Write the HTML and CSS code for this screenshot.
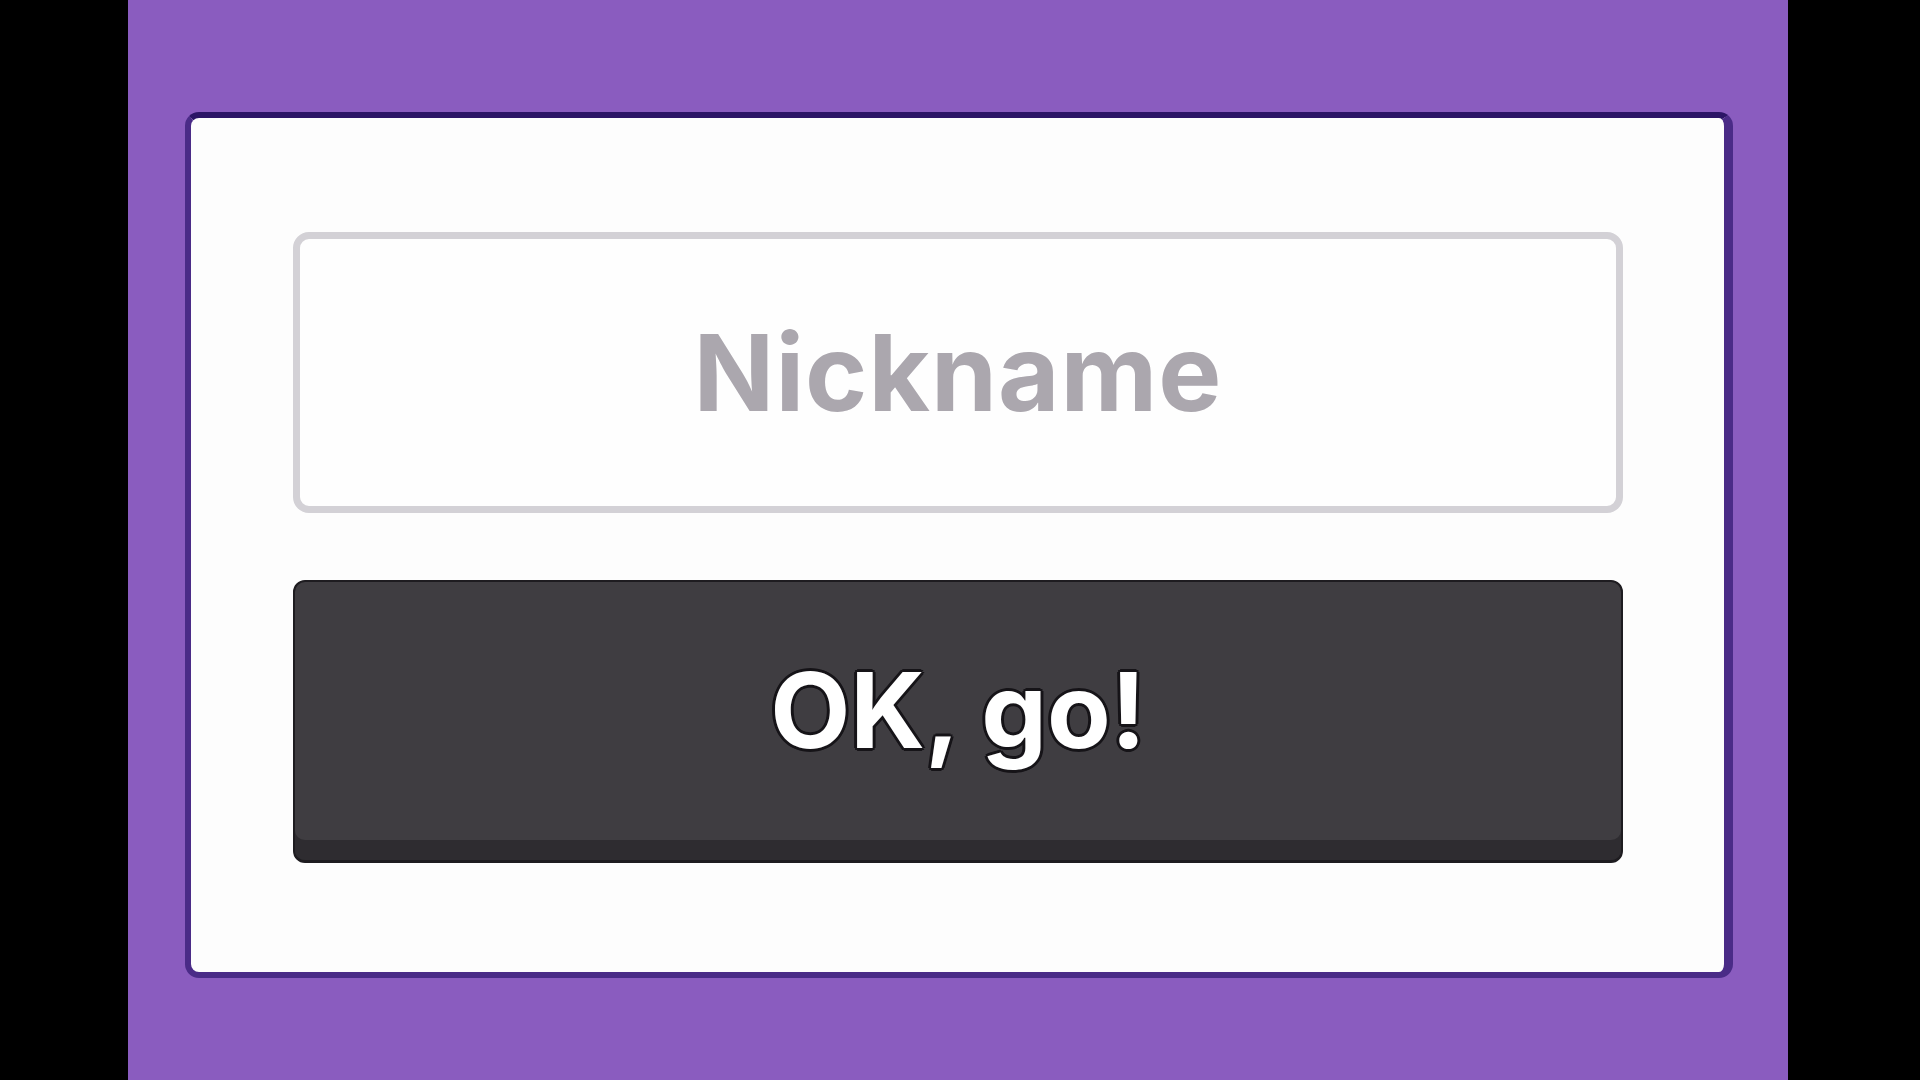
FILE: index.html
```html
<!DOCTYPE html>
<html lang="en">
<head>
<meta charset="utf-8">
<title>Nickname</title>
<link rel="stylesheet" href="styles.css">
</head>
<body>
<div class="stage">
  <div class="card">
    <input class="nick" type="text" placeholder="Nickname">
    <button class="go" type="button">OK, go!</button>
  </div>
</div>
</body>
</html>
```
FILE: styles.css
```css
html, body {
  margin: 0;
  padding: 0;
  background: #000;
  height: 1080px;
  overflow: hidden;
}
.stage {
  margin-left: 128px;
  width: 1660px;
  height: 1080px;
  background: #8a5cbf;
  padding-top: 112px;
  padding-left: 57px;
  box-sizing: border-box;
}
.card {
  box-sizing: border-box;
  width: 1548px;
  height: 866px;
  background: #fdfdfd;
  border: 6px solid #4a2b87;
  border-top-color: #2c1566;
  border-right-width: 9px;
  border-radius: 14px;
  padding: 114px 101px 0 102px;
  display: flex;
  flex-direction: column;
  gap: 67px;
}
.nick {
  box-sizing: border-box;
  width: 100%;
  height: 281px;
  border: 7px solid #d3d1d6;
  border-radius: 16px;
  background: #fefefe;
  text-align: center;
  font-family: Inter, "Liberation Sans", sans-serif;
  font-weight: 700;
  font-size: 106px;
  color: #333;
  outline: none;
  padding: 0 0 0 0;
}
.nick::placeholder {
  color: #aba7ae;
  opacity: 1;
  letter-spacing: 1px;
}
.go {
  box-sizing: border-box;
  width: 100%;
  height: 283px;
  border: 2px solid #1e1c20;
  border-bottom-width: 3px;
  border-radius: 12px;
  background: #3f3d41;
  box-shadow: inset 0 -20px 0 #2e2c30;
  color: #fff;
  font-family: Inter, "Liberation Sans", sans-serif;
  font-weight: 700;
  font-size: 104px;
  padding: 0 0 22px 0;
  cursor: pointer;
  text-shadow: 2px 2px 0 #161418, -2px 2px 0 #161418, 2px -2px 0 #161418, -2px -2px 0 #161418, 0 3px 0 #161418, 0 -3px 0 #161418, 3px 0 0 #161418, -3px 0 0 #161418;
}
```
